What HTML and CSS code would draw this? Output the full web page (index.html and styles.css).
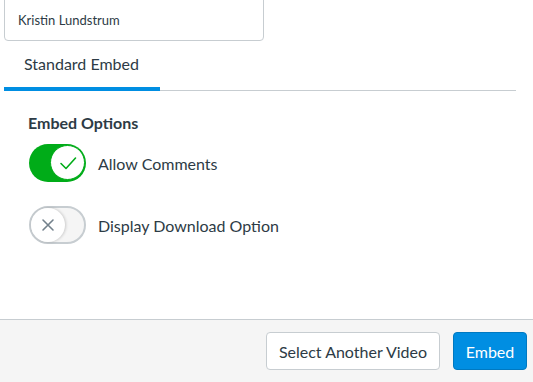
FILE: index.html
```html
<!DOCTYPE html>
<html lang="en">
<head>
  <meta charset="UTF-8">
  <meta name="viewport" content="width=device-width, initial-scale=1.0">
  <title>Embed Video</title>
  <link rel="stylesheet" href="styles.css">
</head>
<body>
  <div class="modal">
    <div class="modal-body">
      <div class="author-card">Kristin Lundstrum</div>
      <div class="tabs" role="tablist">
        <button class="tab" role="tab" aria-selected="true">Standard Embed</button>
      </div>
      <div class="options">
        <h2 class="options-title">Embed Options</h2>
        <label class="option">
          <span class="toggle toggle-on" role="switch" aria-checked="true">
            <span class="knob">
              <svg width="20" height="20" viewBox="0 0 20 20" fill="none" stroke="#00ac18" stroke-width="1.6" stroke-linecap="round" stroke-linejoin="round"><path d="M3 10.5 8 15.5 17.5 5"/></svg>
            </span>
          </span>
          <span class="option-label">Allow Comments</span>
        </label>
        <label class="option">
          <span class="toggle toggle-off" role="switch" aria-checked="false">
            <span class="knob">
              <svg width="14" height="14" viewBox="0 0 14 14" fill="none" stroke="#73818c" stroke-width="1.6" stroke-linecap="round"><path d="M2 2 12 12M12 2 2 12"/></svg>
            </span>
          </span>
          <span class="option-label">Display Download Option</span>
        </label>
      </div>
    </div>
    <div class="modal-footer">
      <button class="btn">Select Another Video</button>
      <button class="btn btn-primary">Embed</button>
    </div>
  </div>
</body>
</html>
```

FILE: styles.css
```css
*, *::before, *::after {
  margin: 0;
  padding: 0;
  box-sizing: border-box;
}
body {
  font-family: Lato, "Liberation Sans", sans-serif;
  color: #2d3b45;
  background: #ffffff;
  width: 533px;
  height: 382px;
  overflow: hidden;
}
.modal {
  display: flex;
  flex-direction: column;
  height: 382px;
}
.modal-body {
  flex: 1;
  padding-left: 4px;
}
.author-card {
  width: 260px;
  height: 42px;
  margin-top: -1px;
  border: 1px solid #c7cdd1;
  border-radius: 0 0 4px 4px;
  display: flex;
  align-items: center;
  padding: 0 13px 0;
  font-size: 13px;
}
.tabs {
  width: 512px;
  display: flex;
  border-bottom: 1px solid #c7cdd1;
}
.tab {
  font: inherit;
  color: inherit;
  background: none;
  border: none;
  border-bottom: 4px solid #008ee2;
  margin-bottom: -1px;
  height: 50px;
  padding: 0 21px 2px 20px;
  font-size: 16px;
}
.options {
  padding: 22px 0 0 24px;
}
.options-title {
  font-size: 16px;
  font-weight: 700;
  line-height: 20px;
  margin-bottom: 11px;
}
.option {
  display: flex;
  align-items: center;
  gap: 12px;
  margin-bottom: 24px;
  font-size: 16px;
}
.toggle {
  position: relative;
  width: 57px;
  height: 38px;
  border-radius: 19px;
  margin-left: 1px;
  flex: none;
}
.toggle-on {
  background: #00ac18;
}
.toggle-off {
  background: #f5f5f5;
  border: 2px solid #c7cdd1;
}
.knob {
  position: absolute;
  width: 35px;
  height: 35px;
  border-radius: 50%;
  background: #ffffff;
  display: flex;
  align-items: center;
  justify-content: center;
}
.toggle-on .knob {
  top: 1px;
  right: 1px;
  border: 1px solid #00ac18;
}
.toggle-off .knob {
  top: 0;
  left: 0;
  width: 34px;
  height: 34px;
  box-shadow: 1px 0 3px rgba(0, 0, 0, 0.18);
}
.modal-footer {
  height: 63px;
  background: #f5f5f5;
  border-top: 1px solid #c7cdd1;
  display: flex;
  justify-content: flex-end;
  align-items: center;
  gap: 13px;
  padding: 0 6px 0 0;
}
.btn {
  font: inherit;
  font-size: 16px;
  color: #2d3b45;
  background: #ffffff;
  border: 1px solid #c7cdd1;
  border-radius: 4px;
  height: 38px;
  width: 174px;
}
.btn-primary {
  background: #008ee2;
  border-color: #0079c1;
  color: #ffffff;
  width: 74px;
}
```
